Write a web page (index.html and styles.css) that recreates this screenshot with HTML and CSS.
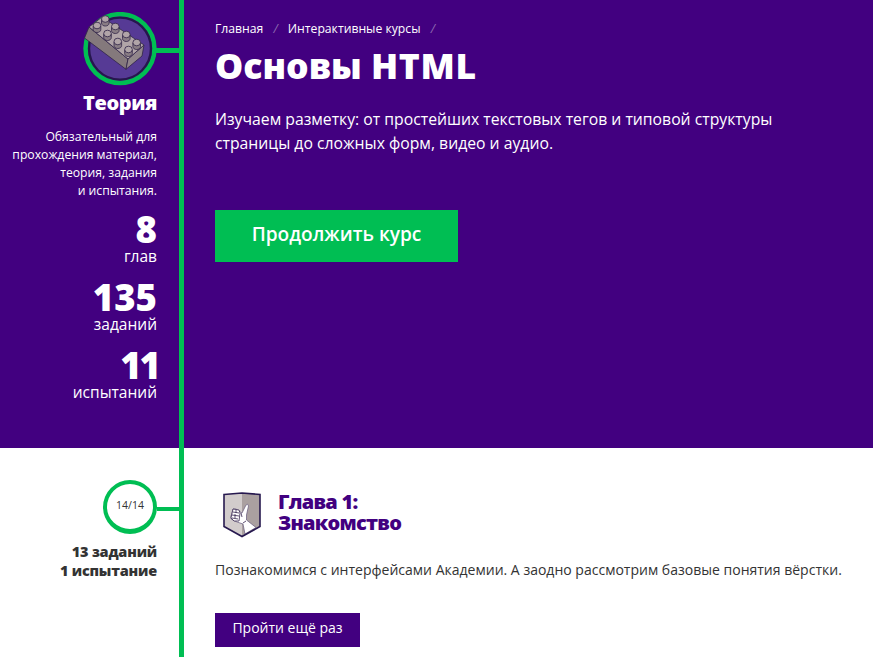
FILE: index.html
```html
<!DOCTYPE html>
<html lang="ru">
<head>
<meta charset="utf-8">
<title>Основы HTML</title>
<link rel="stylesheet" href="styles.css">
</head>
<body>
<header class="row hero">
  <aside class="side">
    <div class="node node-large">
      <svg class="brick" width="74" height="74" viewBox="0 0 74 74" aria-hidden="true">
        <circle cx="37" cy="36.6" r="34.4" fill="#563a95" stroke="#00be53" stroke-width="4.6"/>
        <circle cx="37" cy="36.6" r="31" fill="none" stroke="#26174d" stroke-width="2.4"/>
        <g stroke="#302346" stroke-width=".8" stroke-linejoin="round">
          <path d="M6 15 45 47 43 57.300 1.500 26Z" fill="#84797c"/>
          <path d="M45 47 61 33 59 44 43 57.300Z" fill="#91868a"/>
          <path d="M6 15 19 5 61 33 45 47Z" fill="#b1a5a8"/>
          <g fill="#897d84">
            <path d="M18.500 7.500v3.500c0 4 7.600 4 7.600 0v-3.500Z"/><ellipse cx="22.300" cy="7" rx="3.800" ry="3.300" fill="#b1a5a8"/>
            <path d="M28.500 15v3.500c0 4 7.600 4 7.600 0v-3.500Z"/><ellipse cx="32.300" cy="14.500" rx="3.800" ry="3.300" fill="#b1a5a8"/>
            <path d="M39.500 23v3.500c0 4 7.600 4 7.600 0v-3.500Z"/><ellipse cx="43.300" cy="22.500" rx="3.800" ry="3.300" fill="#b1a5a8"/>
            <path d="M49.900 31v3.500c0 4 7.600 4 7.600 0v-3.500Z"/><ellipse cx="53.700" cy="30.500" rx="3.800" ry="3.300" fill="#b1a5a8"/>
            <path d="M10.200 14v3.500c0 4 7.600 4 7.600 0v-3.500Z"/><ellipse cx="14" cy="13.500" rx="3.800" ry="3.300" fill="#b1a5a8"/>
            <path d="M20.700 22v3.500c0 4 7.600 4 7.600 0v-3.500Z"/><ellipse cx="24.500" cy="21.500" rx="3.800" ry="3.300" fill="#b1a5a8"/>
            <path d="M31 30v3.500c0 4 7.600 4 7.600 0v-3.500Z"/><ellipse cx="34.800" cy="29.500" rx="3.800" ry="3.300" fill="#b1a5a8"/>
            <path d="M41.700 38v3.500c0 4 7.600 4 7.600 0v-3.500Z"/><ellipse cx="45.500" cy="37.500" rx="3.800" ry="3.300" fill="#b1a5a8"/>
          </g>
        </g>
      </svg>
      <span class="link"></span>
    </div>
    <h2 class="side-title">Теория</h2>
    <p class="side-note">Обязательный для<br>прохождения материал,<br>теория, задания<br>и испытания.</p>
    <dl class="stats">
      <div class="stat"><dt>8</dt><dd>глав</dd></div>
      <div class="stat"><dt>135</dt><dd>заданий</dd></div>
      <div class="stat"><dt class="tight">11</dt><dd>испытаний</dd></div>
    </dl>
  </aside>
  <div class="line"></div>
  <main class="content">
    <nav class="crumbs"><a>Главная</a><i>/</i><a>Интерактивные курсы</a><i>/</i></nav>
    <h1 class="title">Основы <span class="latin">HTML</span></h1>
    <p class="lead">Изучаем разметку: от простейших текстовых тегов и типовой структуры<br>страницы до сложных форм, видео и аудио.</p>
    <a class="button button-large">Продолжить курс</a>
  </main>
</header>
<section class="row chapter">
  <aside class="side">
    <div class="node node-small">
      <span class="progress">14/14</span>
      <span class="link"></span>
    </div>
    <p class="totals">13 заданий<br>1 испытание</p>
  </aside>
  <div class="line"></div>
  <div class="content">
    <div class="chapter-head">
      <svg class="shield" width="38" height="46" viewBox="0 0 38 46" aria-hidden="true">
        <path d="M1 2.500 19 1v43.500L1 34.500Z" fill="#d2cccc"/>
        <path d="M19 1 37 2.500v32L19 44.500Z" fill="#aaa0a0"/>
        <path d="M13 17 19 21 22.500 14Q24.500 10.500 25.500 14L23.500 23 23.500 28 33 35.500 22 42 20 32 14 30 8 27 8 24 9 21 10 17Z" fill="#fff" stroke="#66597b" stroke-width=".7"/>
        <path d="M10 17 16 18 17 21 16 29 11 29 8 26Z" fill="#fff" stroke="#372650" stroke-width=".8"/>
        <path d="M10 20 16 21M9 23 16 24M9 26 15 27M13 18v3M12 22v4M18 21l1 4M20 31l3-2" fill="none" stroke="#372650" stroke-width=".8"/>
        <path d="M1 2.500 19 1 37 2.500v32L19 44.500 1 34.500Z" fill="none" stroke="#27194f" stroke-width="1.600"/>
      </svg>
      <h2 class="chapter-title">Глава 1:<br>Знакомство</h2>
    </div>
    <p class="chapter-text">Познакомимся с интерфейсами Академии. А заодно рассмотрим базовые понятия вёрстки.</p>
    <a class="button button-small">Пройти ещё раз</a>
  </div>
</section>
</body>
</html>
```
FILE: styles.css
```css
* { box-sizing: border-box; }
body {
  margin: 0;
  height: 657px;
  overflow: hidden;
  background: #fff;
  color: #333;
  font-family: "Open Sans", "Noto Sans", sans-serif;
}
h1, h2, p, dl, dd { margin: 0; }
.row { display: grid; grid-template-columns: 179px 5px 1fr; }
.hero { height: 448px; background: #420080; color: #fff; }
.chapter { height: 209px; }
.line { background: #00be53; }
.side { text-align: right; white-space: nowrap; }
.side > :not(.node) { padding-right: 22px; }
.content { padding-left: 31px; white-space: nowrap; }

.node { display: flex; justify-content: flex-end; align-items: center; }
.node-large { padding-top: 12px; }
.brick { display: block; flex: none; }
.link { width: 22px; height: 5px; background: #00be53; }
.node-large .link { width: 23px; margin: 3px 0 0 -1px; }
.node-small { padding-top: 32px; }
.node-small .link { height: 4px; margin-top: 4px; }
.progress {
  width: 54px;
  height: 54px;
  border: 4px solid #00be53;
  border-bottom-width: 5px;
  border-radius: 50%;
  font-size: 10.5px;
  line-height: 43px;
  text-align: center;
}

.side-title { margin-top: 3px; font-size: 20px; font-weight: 800; line-height: 28px; letter-spacing: -.4px; }
.side-note { margin-top: 11px; font-size: 12.2px; line-height: 18px; }
.stats { margin-top: 9px; }
.stat { height: 68px; }
.stat dt { height: 37px; font-size: 36.5px; font-weight: 800; line-height: 41px; }
.stat .tight { letter-spacing: -2px; margin-right: -2px; }
.stat dd { font-size: 15.5px; line-height: 20px; }

.crumbs { display: flex; padding-top: 20px; font-size: 12.2px; line-height: 18px; }
.crumbs i { width: 24.5px; text-align: center; color: #8d69b0; }
.title { margin-top: 4px; font-size: 35.5px; font-weight: 800; line-height: 46px; }
.latin { letter-spacing: .7px; }
.lead { margin-top: 19px; font-size: 15.75px; line-height: 24px; }
.button { display: block; color: #fff; text-align: center; }
.button-large { width: 243px; height: 52px; margin-top: 55px; background: #00be53; font-size: 19.1px; font-weight: 600; line-height: 49px; }
.button-small { width: 145px; height: 34px; margin-top: 33px; background: #420080; font-size: 14px; line-height: 30px; }

.totals { margin-top: 8px; font-size: 14.5px; font-weight: 800; line-height: 19px; letter-spacing: -.2px; }
.chapter-head { display: flex; padding: 44px 0 0 8px; }
.shield { display: block; }
.chapter-title { margin: -1px 0 0 17px; color: #420080; font-size: 20px; font-weight: 800; line-height: 21px; letter-spacing: -.75px; }
.chapter-text { margin-top: 22px; font-size: 14.02px; line-height: 20px; }
```
